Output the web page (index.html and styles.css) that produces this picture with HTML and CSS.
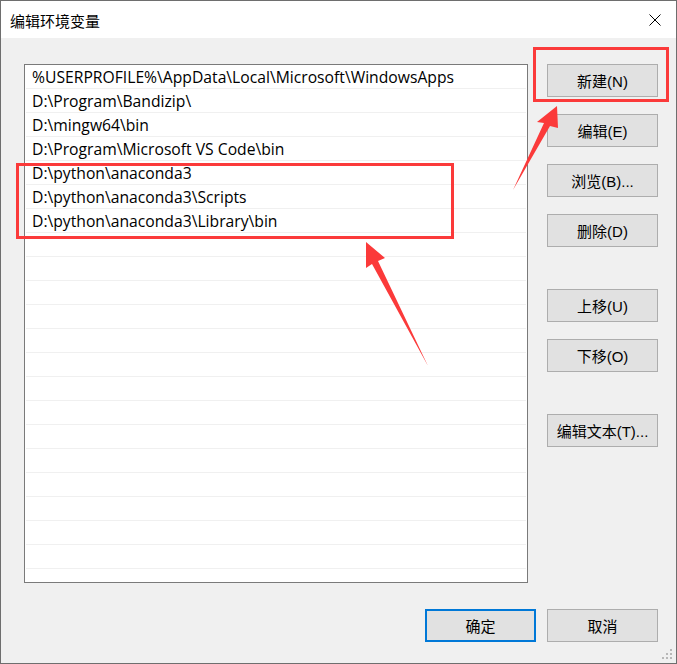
FILE: index.html
```html
<!DOCTYPE html>
<html lang="zh-CN">
<head>
<meta charset="utf-8">
<title>编辑环境变量</title>
<link rel="stylesheet" href="styles.css">
</head>
<body>
<div class="window">
  <div class="titlebar">
    <span class="title">编辑环境变量</span>
    <svg class="close" width="12" height="12" viewBox="0 0 12 12"><path d="M0.5 0.5 L11.5 11.5 M11.5 0.5 L0.5 11.5" stroke="#000" stroke-width="1" fill="none"/></svg>
  </div>
  <div class="body">
    <div class="main">
      <div class="list">
        <div class="row">%USERPROFILE%\AppData\Local\Microsoft\WindowsApps</div>
        <div class="row">D:\Program\Bandizip\</div>
        <div class="row">D:\mingw64\bin</div>
        <div class="row">D:\Program\Microsoft VS Code\bin</div>
        <div class="row">D:\python\anaconda3</div>
        <div class="row">D:\python\anaconda3\Scripts</div>
        <div class="row">D:\python\anaconda3\Library\bin</div>
        <div class="row"></div><div class="row"></div><div class="row"></div>
        <div class="row"></div><div class="row"></div><div class="row"></div>
        <div class="row"></div><div class="row"></div><div class="row"></div>
        <div class="row"></div><div class="row"></div><div class="row"></div>
        <div class="row"></div><div class="row"></div><div class="row"></div>
      </div>
      <div class="side">
        <div class="group">
          <button class="btn">新建(N)</button>
          <button class="btn">编辑(E)</button>
          <button class="btn">浏览(B)...</button>
          <button class="btn">删除(D)</button>
        </div>
        <div class="group">
          <button class="btn">上移(U)</button>
          <button class="btn">下移(O)</button>
        </div>
        <div class="group">
          <button class="btn">编辑文本(T)...</button>
        </div>
      </div>
    </div>
    <div class="footer">
      <button class="btn btn-default">确定</button>
      <button class="btn">取消</button>
    </div>
  </div>

  <div class="mark mark-rows"></div>
  <div class="mark mark-new"></div>
  <svg class="arrows" width="677" height="664" viewBox="0 0 677 664">
    <polygon fill="#fb3a3a" points="557,106 558,128 550,126 513,190 544,123 537,122"/>
    <polygon fill="#fb3a3a" points="366,242 385,258 378,261 428,366 372,264 366,268"/>
  </svg>
  <svg class="grip" width="12" height="12" viewBox="0 0 12 12">
    <rect x="9" y="0" width="2" height="2" fill="#b8b8b8"/>
    <rect x="5" y="4" width="2" height="2" fill="#b8b8b8"/>
    <rect x="9" y="4" width="2" height="2" fill="#b8b8b8"/>
    <rect x="1" y="8" width="2" height="2" fill="#b8b8b8"/>
    <rect x="5" y="8" width="2" height="2" fill="#b8b8b8"/>
    <rect x="9" y="8" width="2" height="2" fill="#b8b8b8"/>
  </svg>
</div>
</body>
</html>
```

FILE: styles.css
```css
* { box-sizing: border-box; }
html, body { margin: 0; padding: 0; background: #f0f0f0; }
body { font-family: "Liberation Sans", "Noto Sans CJK SC", sans-serif; font-size: 15px; color: #000; }

.window {
  position: relative;
  width: 677px;
  height: 664px;
  border: 1px solid #6e6e6e;
  background: #f0f0f0;
  display: flex;
  flex-direction: column;
  overflow: hidden;
}

.titlebar {
  height: 37px;
  background: #fff;
  display: flex;
  align-items: center;
  justify-content: space-between;
  padding: 0 15px 0 9px;
  flex: none;
}
.title { font-family: "Noto Sans CJK SC", sans-serif; font-size: 15px; line-height: 1; margin-top: 1px; }
.close { display: block; margin-top: 1px; }

.body {
  flex: 1;
  padding: 26px 18px 0 23px;
  display: flex;
  flex-direction: column;
}

.main { display: flex; gap: 19px; }

.list {
  width: 504px;
  height: 519px;
  background: #fff;
  border: 1px solid #7a7a7a;
  padding: 0 1px;
  overflow: hidden;
}
.row {
  height: 24px;
  border-bottom: 1px solid #f0f0f0;
  padding: 1px 0 0 6px;
  font-family: "Open Sans", "Noto Sans CJK SC", sans-serif;
  font-size: 15.7px;
  line-height: 22px;
  white-space: nowrap;
}

.side { width: 111px; display: flex; flex-direction: column; gap: 42px; }
.group { display: flex; flex-direction: column; gap: 17px; }

.btn {
  width: 111px;
  height: 33px;
  background: #e1e1e1;
  border: 1px solid #adadad;
  font-family: "Liberation Sans", "Noto Sans CJK SC", sans-serif;
  font-size: 15px;
  color: #000;
  padding: 0;
  margin: 0;
}
.btn-default { border: 2px solid #0078d7; }

.footer {
  display: flex;
  justify-content: flex-end;
  gap: 11px;
  margin-top: 26px;
}

.mark { position: absolute; border: 3px solid #fb3a3a; }
.mark-rows { left: 15px; top: 162px; width: 438px; height: 76px; }
.mark-new { left: 532px; top: 46px; width: 136px; height: 55px; }

.arrows { position: absolute; left: -1px; top: -1px; pointer-events: none; }
.grip { position: absolute; right: 3px; bottom: 2px; }
```
